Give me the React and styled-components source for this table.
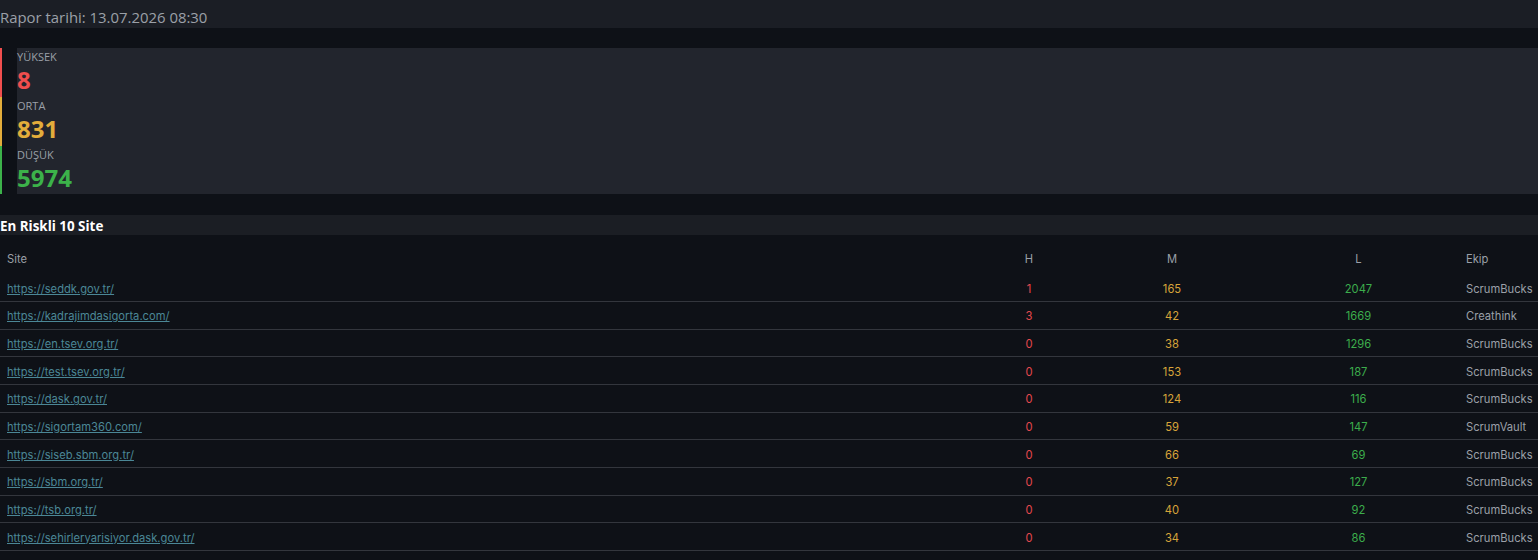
import React from "react";
import styled, { createGlobalStyle } from "styled-components";

const GlobalStyle = createGlobalStyle`
  html, body {
    margin: 0;
    padding: 0;
    background: #0e1117;
  }
  body {
    font-family: "Open Sans", "Noto Sans", sans-serif;
  }
`;

const Page = styled.div`
  width: 1538px;
  height: 560px;
  overflow: hidden;
  background: #0e1117;
  display: flex;
  flex-direction: column;
`;

const ReportDate = styled.div`
  height: 28px;
  background: #1b1e25;
  color: #9ba0a8;
  font-size: 14.9px;
  line-height: 34px;
  white-space: nowrap;
  overflow: hidden;
`;

const Stats = styled.div`
  margin-top: 20px;
  display: flex;
  flex-direction: column;
`;

const StatRow = styled.div`
  display: flex;
  height: 49px;
  &:last-child {
    height: 48px;
  }
`;

const StatBar = styled.div`
  width: 2px;
  background: ${({ color }) => color};
  margin-right: 15px;
`;

const StatBody = styled.div`
  flex: 1;
  background: #22252d;
  display: flex;
  flex-direction: column;
  padding-top: 2px;
`;

const StatLabel = styled.div`
  font-size: 11px;
  line-height: 14px;
  color: #9ba0a8;
`;

const StatValue = styled.div`
  font-size: 24px;
  line-height: 32px;
  font-weight: 700;
  color: ${({ color }) => color};
`;

const SectionTitle = styled.div`
  margin-top: 21px;
  height: 20px;
  background: #1b1e24;
  color: #ffffff;
  font-size: 13.4px;
  font-weight: 700;
  line-height: 22px;
`;

const Table = styled.div`
  margin-top: 9px;
  font-family: Inter, "Noto Sans", sans-serif;
  font-size: 11.2px;
`;

const Row = styled.div`
  box-sizing: border-box;
  display: grid;
  grid-template-columns: 972px 114px 172px 201px 1fr;
  height: ${({ head }) => (head ? "30.5px" : "27.67px")};
  padding-top: ${({ head }) => (head ? "0" : "2px")};
  align-items: ${({ head }) => (head ? "start" : "center")};
  line-height: ${({ head }) => (head ? "30px" : "normal")};
  border-bottom: ${({ head }) => (head ? "none" : "1px solid #33363d")};
`;

const Cell = styled.div`
  text-align: ${({ align }) => align || "left"};
  padding-left: ${({ align }) => (align === "center" ? "0" : "7px")};
  color: ${({ color }) => color || "#9ba0a8"};
  white-space: nowrap;
`;

const SiteLink = styled.a`
  color: #4b8796;
  text-decoration: underline;
`;

const stats = [
  { label: "YÜKSEK", value: 8, color: "#f04e4e" },
  { label: "ORTA", value: 831, color: "#e3ad3b" },
  { label: "DÜŞÜK", value: 5974, color: "#3cb24a" },
];

const sites = [
  ["https://seddk.gov.tr/", 1, 165, 2047, "ScrumBucks"],
  ["https://kadrajimdasigorta.com/", 3, 42, 1669, "Creathink"],
  ["https://en.tsev.org.tr/", 0, 38, 1296, "ScrumBucks"],
  ["https://test.tsev.org.tr/", 0, 153, 187, "ScrumBucks"],
  ["https://dask.gov.tr/", 0, 124, 116, "ScrumBucks"],
  ["https://sigortam360.com/", 0, 59, 147, "ScrumVault"],
  ["https://siseb.sbm.org.tr/", 0, 66, 69, "ScrumBucks"],
  ["https://sbm.org.tr/", 0, 37, 127, "ScrumBucks"],
  ["https://tsb.org.tr/", 0, 40, 92, "ScrumBucks"],
  ["https://sehirleryarisiyor.dask.gov.tr/", 0, 34, 86, "ScrumBucks"],
];

const App = () => {
  return (
    <Page>
      <GlobalStyle />
      <ReportDate>Rapor tarihi: 13.07.2026 08:30</ReportDate>
      <Stats>
        {stats.map((s) => (
          <StatRow key={s.label}>
            <StatBar color={s.color} />
            <StatBody>
              <StatLabel>{s.label}</StatLabel>
              <StatValue color={s.color}>{s.value}</StatValue>
            </StatBody>
          </StatRow>
        ))}
      </Stats>
      <SectionTitle>En Riskli 10 Site</SectionTitle>
      <Table>
        <Row head>
          <Cell>Site</Cell>
          <Cell align="center">H</Cell>
          <Cell align="center">M</Cell>
          <Cell align="center">L</Cell>
          <Cell>Ekip</Cell>
        </Row>
        {sites.map(([url, h, m, l, team]) => (
          <Row key={url}>
            <Cell>
              <SiteLink href={url}>{url}</SiteLink>
            </Cell>
            <Cell align="center" color="#e5484d">{h}</Cell>
            <Cell align="center" color="#d8a43a">{m}</Cell>
            <Cell align="center" color="#3cad4c">{l}</Cell>
            <Cell>{team}</Cell>
          </Row>
        ))}
      </Table>
    </Page>
  );
};

export default App;
